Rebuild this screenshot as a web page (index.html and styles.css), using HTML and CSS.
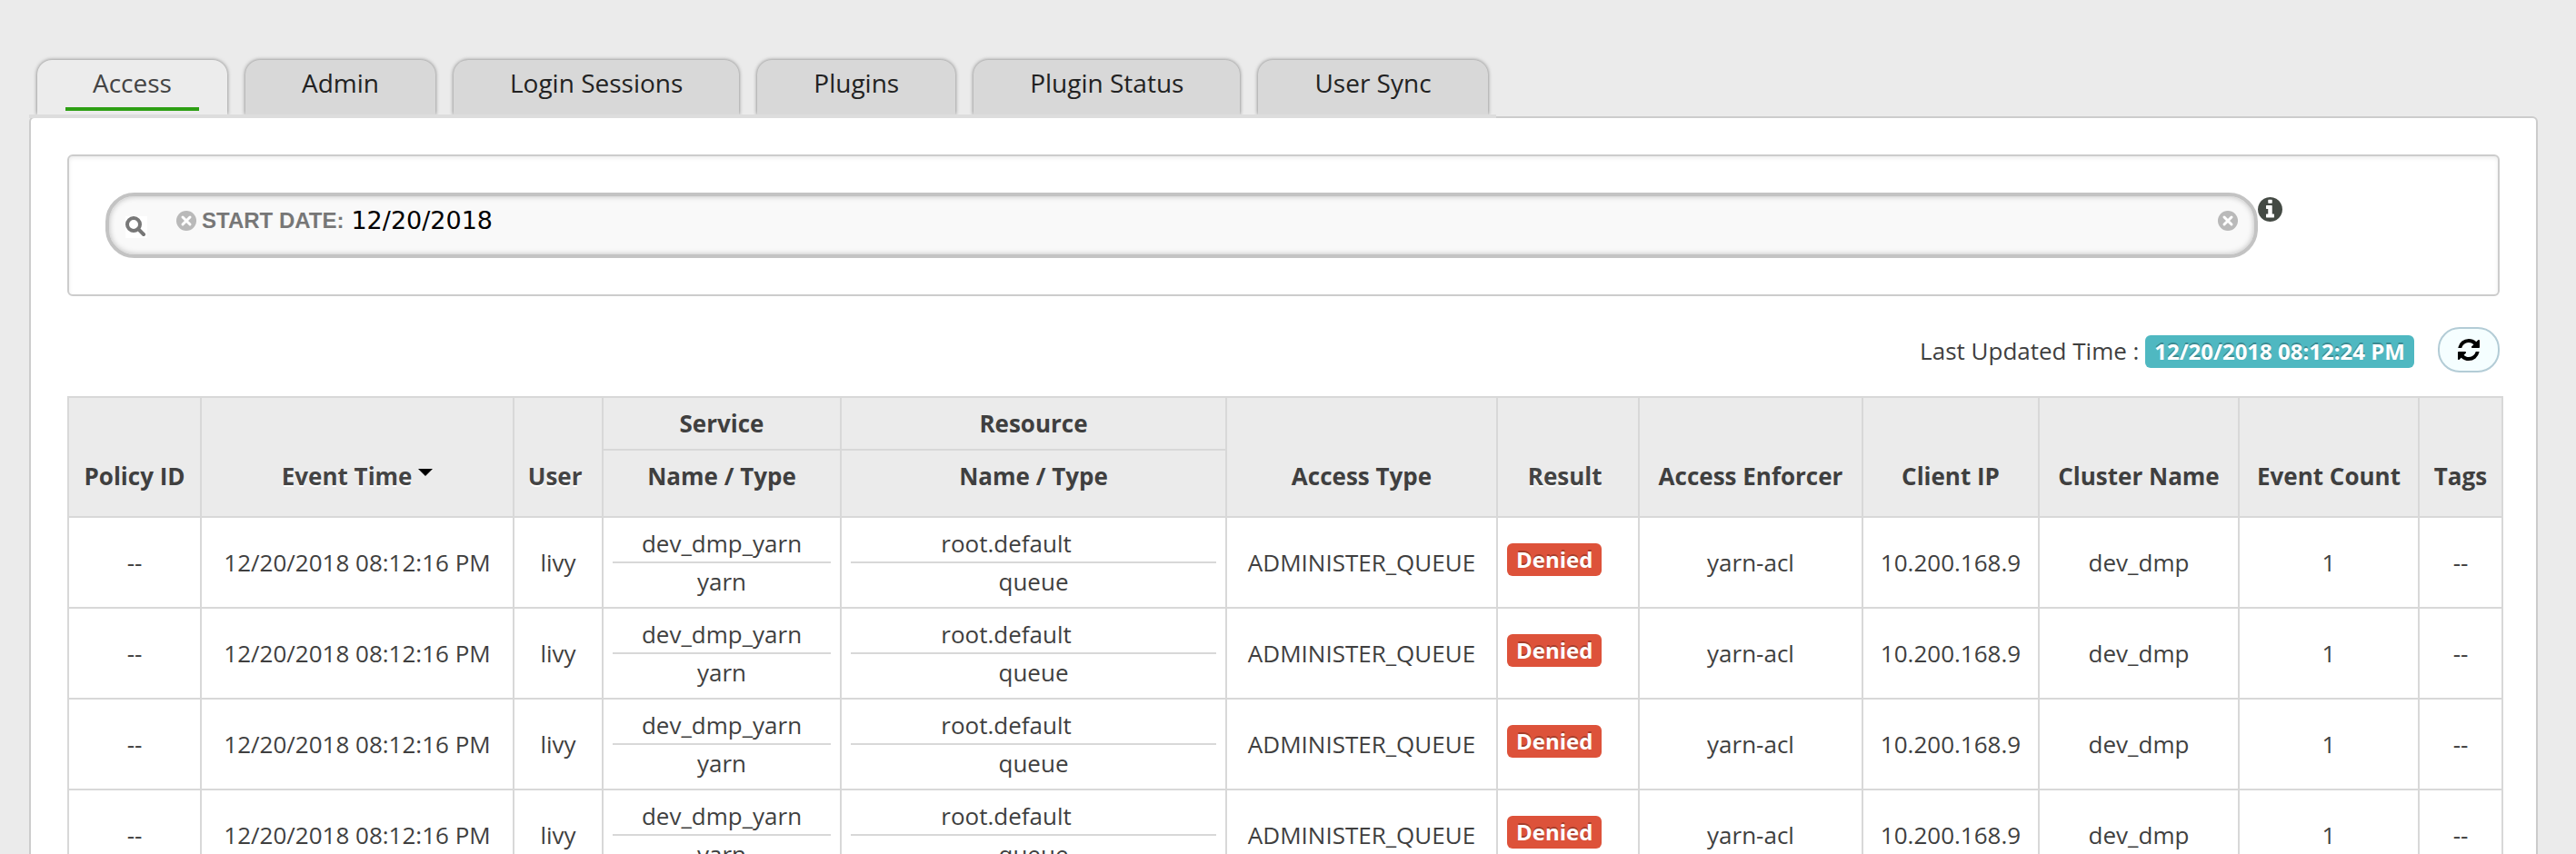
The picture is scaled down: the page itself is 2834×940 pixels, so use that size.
FILE: index.html
```html
<!DOCTYPE html>
<html lang="en">
<head>
<meta charset="utf-8">
<title>Audit - Access</title>
<link rel="stylesheet" href="styles.css">
</head>
<body>
<nav class="tabs">
  <a class="tab tab-active" href="#access"><span class="tab-label">Access</span></a>
  <a class="tab" href="#admin"><span class="tab-label">Admin</span></a>
  <a class="tab" href="#sessions"><span class="tab-label">Login Sessions</span></a>
  <a class="tab" href="#plugins"><span class="tab-label">Plugins</span></a>
  <a class="tab" href="#status"><span class="tab-label">Plugin Status</span></a>
  <a class="tab" href="#usersync"><span class="tab-label">User Sync</span></a>
</nav>
<main class="panel">
  <section class="filter">
    <div class="search">
      <svg class="search-icon" viewBox="0 0 24 24" aria-hidden="true"><path fill="#fff" d="M0 0h24v24H0z"/><circle cx="9" cy="9" r="7" fill="none" stroke="#777" stroke-width="4"/><path d="M14 14l6 6" stroke="#777" stroke-width="4" stroke-linecap="round"/></svg>
      <button class="clear" type="button" aria-label="Remove start date"><svg viewBox="0 0 22 22"><circle cx="11" cy="11" r="11" fill="#b9b9b9"/><path d="M7 7l8 8M15 7l-8 8" stroke="#fff" stroke-width="3" stroke-linecap="round"/></svg></button>
      <label class="facet" for="start-date">START DATE:</label>
      <input class="facet-value" id="start-date" type="text" value="12/20/2018">
      <button class="clear" type="button" aria-label="Clear search"><svg viewBox="0 0 22 22"><circle cx="11" cy="11" r="11" fill="#b9b9b9"/><path d="M7 7l8 8M15 7l-8 8" stroke="#fff" stroke-width="3" stroke-linecap="round"/></svg></button>
    </div>
    <svg class="info" viewBox="128 128 1536 1536" role="img" aria-label="Search help"><path d="M1152 1376v-160q0-14-9-23t-23-9h-96v-512q0-14-9-23t-23-9h-320q-14 0-23 9t-9 23v160q0 14 9 23t23 9h96v320h-96q-14 0-23 9t-9 23v160q0 14 9 23t23 9h448q14 0 23-9t9-23zm-128-896v-160q0-14-9-23t-23-9h-192q-14 0-23 9t-9 23v160q0 14 9 23t23 9h192q14 0 23-9t9-23zm640 416q0 209-103 385.5t-279.5 279.5-385.5 103-385.5-103-279.5-279.5-103-385.5 103-385.5 279.5-279.5 385.5-103 385.5 103 279.5 279.5 103 385.5z"/></svg>
  </section>
  <div class="updated">
    <p class="updated-text">Last Updated Time : <span class="badge badge-info">12/20/2018 08:12:24 PM</span></p>
    <button class="refresh" type="button" aria-label="Refresh"><svg viewBox="0 0 1536 1536"><path d="M1511 928q0 5-1 7q-64 268-268 434.500t-478 166.500q-146 0-282.500-55t-243.500-157l-129 129q-19 19-45 19t-45-19t-19-45v-448q0-26 19-45t45-19h448q26 0 45 19t19 45t-19 45l-137 137q71 66 161 102t187 36q134 0 250-65t186-179q11-17 53-117q8-23 30-23h192q13 0 22.500 9.500t9.500 22.500zM1536 128v448q0 26-19 45t-45 19h-448q-26 0-45-19t-19-45t19-45l138-138q-148-137-349-137q-134 0-250 65t-186 179q-11 17-53 117q-8 23-30 23h-199q-13 0-22.500-9.500t-9.500-22.500v-7q65-268 270-434.500t480-166.500q146 0 284 55.500t245 156.500l130-129q19-19 45-19t45 19t19 45z"/></svg></button>
  </div>
  <table class="audit">
    <colgroup>
      <col class="c-policy"><col class="c-time"><col class="c-user"><col class="c-service"><col class="c-resource"><col class="c-type"><col class="c-result"><col class="c-enforcer"><col class="c-ip"><col class="c-cluster"><col class="c-count"><col class="c-tags">
    </colgroup>
    <thead>
      <tr>
        <th rowspan="2">Policy ID</th>
        <th rowspan="2" class="sortable">Event Time&nbsp;<svg class="caret" viewBox="0 0 16 8" aria-hidden="true"><path d="M0 0h16L8 8z"/></svg></th>
        <th rowspan="2" class="sortable">User&nbsp;</th>
        <th class="group">Service</th>
        <th class="group">Resource</th>
        <th rowspan="2">Access Type</th>
        <th rowspan="2" class="sortable">Result&nbsp;</th>
        <th rowspan="2">Access Enforcer</th>
        <th rowspan="2">Client IP</th>
        <th rowspan="2">Cluster Name</th>
        <th rowspan="2">Event Count</th>
        <th rowspan="2">Tags</th>
      </tr>
      <tr><th>Name / Type</th><th>Name / Type</th></tr>
    </thead>
    <tbody>
      <tr><td>--</td><td>12/20/2018 08:12:16 PM</td><td>livy</td><td><div class="name">dev_dmp_yarn</div><div>yarn</div></td><td><div class="name resource">root.default</div><div>queue</div></td><td>ADMINISTER_QUEUE</td><td class="result"><span class="badge badge-denied">Denied</span></td><td>yarn-acl</td><td>10.200.168.9</td><td>dev_dmp</td><td>1</td><td>--</td></tr>
      <tr><td>--</td><td>12/20/2018 08:12:16 PM</td><td>livy</td><td><div class="name">dev_dmp_yarn</div><div>yarn</div></td><td><div class="name resource">root.default</div><div>queue</div></td><td>ADMINISTER_QUEUE</td><td class="result"><span class="badge badge-denied">Denied</span></td><td>yarn-acl</td><td>10.200.168.9</td><td>dev_dmp</td><td>1</td><td>--</td></tr>
      <tr><td>--</td><td>12/20/2018 08:12:16 PM</td><td>livy</td><td><div class="name">dev_dmp_yarn</div><div>yarn</div></td><td><div class="name resource">root.default</div><div>queue</div></td><td>ADMINISTER_QUEUE</td><td class="result"><span class="badge badge-denied">Denied</span></td><td>yarn-acl</td><td>10.200.168.9</td><td>dev_dmp</td><td>1</td><td>--</td></tr>
      <tr><td>--</td><td>12/20/2018 08:12:16 PM</td><td>livy</td><td><div class="name">dev_dmp_yarn</div><div>yarn</div></td><td><div class="name resource">root.default</div><div>queue</div></td><td>ADMINISTER_QUEUE</td><td class="result"><span class="badge badge-denied">Denied</span></td><td>yarn-acl</td><td>10.200.168.9</td><td>dev_dmp</td><td>1</td><td>--</td></tr>
    </tbody>
  </table>
</main>
</body>
</html>
```
FILE: styles.css
```css
* { box-sizing: border-box; }

body {
  margin: 0;
  padding: 66px 42px 0 32px;
  height: 100vh;
  overflow: hidden;
  background: #ebebeb;
  color: #3f3f3f;
  font: 26px/40px "Open Sans", "Noto Sans", sans-serif;
}

button { border: 0; padding: 0; background: none; cursor: pointer; }
svg { display: block; }

/* Tabs */
.tabs {
  display: flex;
  width: fit-content;
  gap: 20px;
  padding: 0 9px;
  margin-bottom: -2px;
  border-bottom: 4px solid #ddd;
  position: relative;
  z-index: 1;
}
.tab {
  padding: 5px 31px 4px;
  border-radius: 16px 16px 0 0;
  background: #d8d8d8;
  box-shadow: 0 0 4px rgba(0, 0, 0, .5);
  clip-path: inset(-8px -8px 0);
  color: #222;
  font-size: 28px;
  text-decoration: none;
  white-space: nowrap;
}
.tab-label {
  display: block;
  padding: 0 31px 7px;
  border-bottom: 4px solid transparent;
}
.tab-active { background: #ececec; color: #444; }
.tab-active .tab-label { padding: 0 30px 7px; border-color: #2d9f13; }

/* Panel */
.panel {
  padding: 40px;
  border: 2px solid #ccc;
  border-radius: 6px;
  background: #fff;
}

/* Search */
.filter {
  display: flex;
  align-items: flex-start;
  padding: 40px;
  border: 2px solid #ccc;
  border-radius: 6px;
  box-shadow: inset 0 2px 4px rgba(0, 0, 0, .08);
}
.search {
  display: flex;
  align-items: center;
  flex: 0 0 91.35%;
  height: 72px;
  padding: 0 18px 10px;
  border: 4px solid #c3c3c3;
  border-radius: 32px;
  background: #f9f9f9;
  box-shadow: inset 0 0 6px rgba(0, 0, 0, .25);
}
.search-icon { width: 24px; height: 24px; margin: 14px 32px 0 0; }
.clear { flex: none; width: 22px; height: 22px; }
.facet {
  margin: 0 8px 0 6px;
  color: #777;
  font: bold 24px/32px "Liberation Sans", Arial, sans-serif;
}
.facet-value {
  flex: 1;
  min-width: 0;
  padding: 0;
  border: 0;
  background: transparent;
  color: #000;
  font: 27px/32px "DejaVu Sans", sans-serif;
}
.info { flex: none; width: 27px; height: 27px; margin-top: 5px; fill: #444a44; }

/* Last update */
.updated {
  display: flex;
  justify-content: flex-end;
  align-items: center;
  gap: 26px;
  margin: 34px 0 26px;
}
.updated-text { margin: 0; padding-top: 2px; }
.badge {
  display: inline-block;
  padding: 4px 10px;
  border-radius: 6px;
  color: #fff;
  font-size: 24px;
  font-weight: bold;
  line-height: 28px;
  text-shadow: 0 -2px 0 rgba(0, 0, 0, .25);
}
.badge-info { background: #4fb8c1; }
.badge-denied { display: block; width: fit-content; background: #dd523a; }
.refresh {
  display: flex;
  align-items: center;
  justify-content: center;
  width: 68px;
  height: 50px;
  border: 2px solid #b3ccd6;
  border-radius: 24px;
  background: #f5feff;
}
.refresh svg { width: 24px; height: 24px; }

/* Audit table */
.audit {
  width: calc(100% + 4px);
  table-layout: fixed;
  border-collapse: collapse;
  text-align: center;
  white-space: nowrap;
}
.audit th, .audit td { border: 2px solid #d8d8d8; padding: 8px 10px; }
.audit th {
  padding-right: 0;
  padding-bottom: 24px;
  padding-left: 0;
  background: #ebebeb;
  vertical-align: bottom;
}
.audit .group { padding-bottom: 8px; }
.audit .sortable { color: #444; text-shadow: 0 2px 0 #fff; }
.caret { display: inline-block; width: 16px; height: 8px; vertical-align: 10px; }
.name { border-bottom: 2px solid #d8d8d8; }
.resource { padding-right: 60px; }
.audit .result { padding-bottom: 14px; text-align: left; }
.c-policy { width: 146px; }
.c-time { width: 344px; }
.c-user { width: 98px; }
.c-service { width: 262px; }
.c-resource { width: 424px; }
.c-type { width: 298px; }
.c-result { width: 156px; }
.c-enforcer { width: 246px; }
.c-ip { width: 194px; }
.c-cluster { width: 220px; }
.c-count { width: 198px; }
.c-tags { width: 92px; }
```
